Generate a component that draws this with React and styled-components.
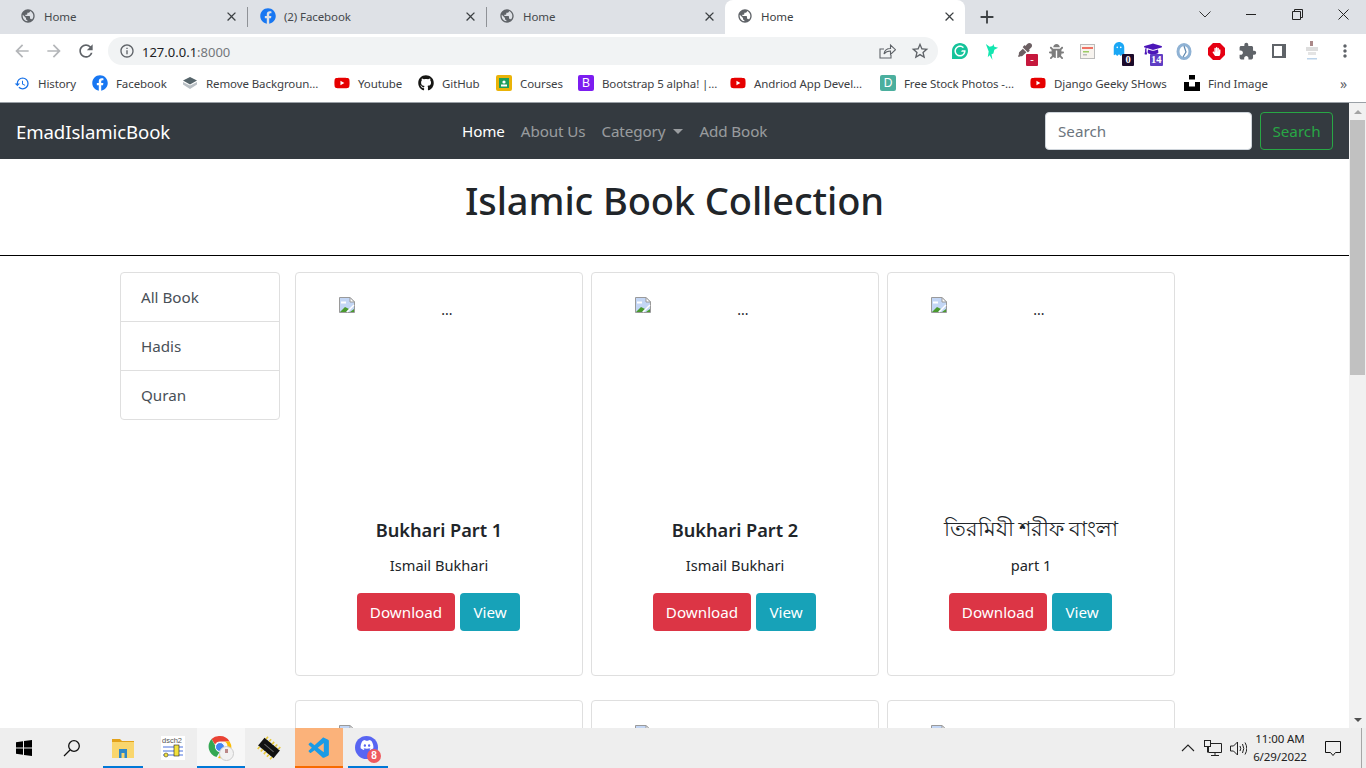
import React from 'react';
import styled, { createGlobalStyle } from 'styled-components';
import { MdPublic, MdClose, MdAdd, MdArrowBack, MdArrowForward, MdRefresh, MdInfoOutline, MdStarBorder, MdMoreVert, MdExtension, MdHistory } from 'react-icons/md';
import { FaFacebook, FaGithub, FaYoutube, FaGhost, FaEyeDropper, FaBug, FaGraduationCap, FaHandPaper, FaDiscord } from 'react-icons/fa';
import { SiGrammarly, SiUnsplash } from 'react-icons/si';
import { VscVscode } from 'react-icons/vsc';

const UI = '"Noto Sans", "Open Sans", "Noto Sans CJK SC", sans-serif';

const Global = createGlobalStyle`
  html, body { margin: 0; padding: 0; height: 100%; overflow: hidden; background: #fff; }
  body { font-family: ${UI}; color: #212529; }
  * { box-sizing: border-box; }
`;

const Shell = styled.div`
  width: 1366px; height: 768px; display: flex; flex-direction: column; overflow: hidden;
`;

/* tab strip */
const TabStrip = styled.div`
  height: 34px; background: #dee1e6; display: flex; padding-left: 8px; flex-shrink: 0; align-items: stretch;
`;
const Tab = styled.div`
  width: ${p => p.$w}px; display: flex; align-items: center; padding: 0 8px 2px 12px;
  font-size: 11.5px; color: ${p => p.$active ? '#3c4043' : '#45484c'}; letter-spacing: -.1px;
  background: ${p => p.$active ? '#fff' : 'transparent'};
  border-radius: ${p => p.$active ? '8px 8px 0 0' : '0'};
`;
const TabSep = styled.span`
  width: 1px; height: 20px; background: #8f9297; align-self: center;
`;
const TabLabel = styled.span`flex: 1; margin-left: 8px; white-space: nowrap;`;
const TabClose = styled(MdClose)`font-size: 15px; color: #3c4043;`;
const NewTab = styled(MdAdd)`font-size: 22px; color: #3c4043; margin: 6px 0 0 11px;`;
const WinControls = styled.div`
  margin-left: auto; display: flex; color: #3c4043; height: 28px; align-items: center;
`;
const WinBtn = styled.div`
  width: 46px; height: 28px; display: flex; align-items: center; justify-content: center;
`;

/* toolbar */
const Toolbar = styled.div`
  height: 34px; background: #fff; display: flex; align-items: center; padding-left: 12px; flex-shrink: 0;
`;
const NavIcon = styled.div`
  width: 32px; height: 28px; display: flex; align-items: center; justify-content: center;
  margin-left: ${p => p.$first ? '-6px' : '0'};
  color: ${p => p.$off ? '#b4b6b9' : '#5f6368'}; font-size: 20px;
`;
const Omnibox = styled.div`
  width: 830px; height: 28px; margin-left: 6px; border-radius: 14px; background: #f1f3f4;
  display: flex; align-items: center; padding: 0 8px 0 11px; font-size: 13px; color: #202124;
`;
const OmniInfo = styled(MdInfoOutline)`font-size: 16px; color: #5f6368; margin-right: 7px;`;
const OmniText = styled.span`padding-top: 2px;`;
const OmniPort = styled.span`color: #74777b;`;
const OmniRight = styled.div`margin-left: auto; display: flex; gap: 14px; align-items: center; color: #5f6368;`;
const Exts = styled.div`display: flex; align-items: center; margin-left: 6px;`;
const Ext = styled.div`
  width: ${p => p.$w || 32}px; height: 28px; position: relative; display: flex; align-items: center; justify-content: center;
  font-size: 16px; color: ${p => p.$c || '#5f6368'}; padding: 0 ${p => p.$pr || 0}px ${p => p.$pb || 0}px 0;
`;
const ExtBadge = styled.span`
  position: absolute; left: ${p => p.$l}px; bottom: -1px; min-width: 12px; height: 12px; padding: 0 1px;
  background: ${p => p.$bg}; color: #fff; font: 700 10.5px/12px "Liberation Serif", serif; text-align: center; border-radius: 1px;
`;

/* bookmarks */
const BookmarkBar = styled.div`
  height: 35px; background: #fff; border-bottom: 1px solid #9aa0a6; display: flex; align-items: center;
  padding-left: 14px; flex-shrink: 0; font-size: 11.5px; color: #3c4043; letter-spacing: -.1px; padding-bottom: 4px;
`;
const Bookmark = styled.div`
  width: ${p => p.$w}px; display: flex; align-items: center; gap: 8px; white-space: nowrap; flex-shrink: 0;
`;
const BmIcon = styled.span`
  width: 16px; height: 16px; display: flex; align-items: center; justify-content: center;
  color: ${p => p.$c}; font-size: 16px; flex-shrink: 0;
`;
const BmSquare = styled.span`
  width: 16px; height: 16px; border-radius: 2px; background: ${p => p.$bg}; color: #fff;
  font: 400 12px/16px "Liberation Sans", sans-serif; text-align: center; flex-shrink: 0;
`;
const BmMore = styled.span`margin-left: auto; margin-right: 19px; font-size: 14px; color: #5f6368;`;

/* page */
const Viewport = styled.div`flex: 1; display: flex; overflow: hidden; min-height: 0;`;
const Page = styled.div`width: 1349px; overflow: hidden; background: #fff;`;
const Navbar = styled.nav`
  height: 56px; background: #343a40; display: flex; align-items: center; padding: 0 16px;
`;
const Brand = styled.div`font-size: 18.6px; color: #fff; letter-spacing: -.1px; width: 446px; white-space: nowrap;`;
const NavList = styled.div`display: flex; gap: 16px; font-size: 15.2px; letter-spacing: -.1px;`;
const NavLink = styled.div`
  color: ${p => p.$active ? '#fff' : 'rgba(255,255,255,.5)'}; white-space: nowrap; display: flex; align-items: center;
`;
const Caret = styled.span`
  display: inline-block; margin-left: 8px; border-top: 5px solid currentColor;
  border-left: 5px solid transparent; border-right: 5px solid transparent;
`;
const SearchForm = styled.div`margin-left: auto; display: flex; gap: 8px;`;
const SearchInput = styled.input`
  width: 207px; height: 38px; border: 1px solid #ced4da; border-radius: 4px; padding: 0 12px;
  font: 15.2px ${UI}; background: #fff; &::placeholder { color: #6c757d; opacity: 1; }
`;
const SearchBtn = styled.button`
  width: 73px; height: 38px; border: 1px solid #28a745; border-radius: 4px; color: #28a745;
  background: transparent; font: 15.2px ${UI}; padding: 0;
`;
const Hero = styled.header`
  height: 97px; border-bottom: 1px solid #000; display: flex; align-items: center; justify-content: center;
`;
const Title = styled.h1`margin: 0 0 14px; font-size: 38px; font-weight: 500; line-height: 48px; color: #212529; letter-spacing: -.1px;`;
const Content = styled.div`display: flex; gap: 15px; padding: 16px 0 0 120px; align-items: flex-start;`;
const Side = styled.ul`
  width: 160px; margin: 0; padding: 0; list-style: none; border: 1px solid #dfdfdf; border-radius: 4px; flex-shrink: 0;
`;
const SideItem = styled.li`
  height: 49px; display: flex; align-items: center; padding-left: 20px; font-size: 15.2px; color: #495057;
  & + & { border-top: 1px solid #dfdfdf; }
  &:first-child { height: 48px; }
`;
const Grid = styled.div`display: grid; grid-template-columns: repeat(3, 288px); column-gap: 8px; row-gap: 24px;`;
const Card = styled.article`
  height: 404px; border: 1px solid #dfdfdf; border-radius: 4px; padding-top: 24px;
  display: flex; flex-direction: column; align-items: center;
`;
const Thumb = styled.div`
  width: 200px; height: 200px; flex-shrink: 0; display: flex; position: relative; justify-content: center;
  padding-left: 16px; font-size: 14px; line-height: 25px; color: #212529;
`;
const BrokenIcon = styled.svg`position: absolute; left: 0; top: 0;`;
const CardTitle = styled.h5`
  margin: 21px 0 11px; font-size: ${p => p.$bn ? '21px' : '18.2px'}; font-weight: ${p => p.$bn ? 400 : 600};
  line-height: 24px; color: #212529; white-space: nowrap; transform: translateY(${p => p.$bn ? '-2px' : '0'});
`;
const CardText = styled.p`margin: 0 0 16px; font-size: 14.6px; line-height: 24px; color: #212529;`;
const Actions = styled.div`display: flex; gap: 5px; margin-right: 1px;`;
const Btn = styled.button`
  width: ${p => p.$w}px; height: 38px; border: 0; border-radius: 4px; background: ${p => p.$bg}; color: #fff;
  font: 15.2px ${UI}; padding: 0;
`;
const Scrollbar = styled.div`
  width: 17px; background: #f1f1f1; display: flex; flex-direction: column; align-items: center;
`;
const ScrollArrow = styled.div`
  height: 17px; width: 17px; display: flex; align-items: center; justify-content: center;
  &::before { content: ''; border-left: 4px solid transparent; border-right: 4px solid transparent;
    ${p => p.$up ? 'border-bottom: 4px solid #a3a3a3;' : 'border-top: 4px solid #505050;'} }
`;
const ScrollThumb = styled.div`width: 15px; height: 255px; background: #c1c1c1; margin-bottom: auto;`;

/* taskbar */
const Taskbar = styled.footer`
  height: 40px; background: #eeeeee; display: flex; align-items: stretch; flex-shrink: 0; color: #111;
`;
const TaskSlot = styled.div`
  width: ${p => p.$w || 48}px; margin-left: ${p => p.$ml || 0}px; display: flex; align-items: center; justify-content: center; position: relative;
  background: ${p => p.$bg || 'transparent'};
  box-shadow: ${p => p.$line ? `inset 0 -2px 0 ${p.$line}` : 'none'};
`;
const DiscordGlyph = styled(FaDiscord)`position: absolute; left: 12px; top: 10px;`;
const TaskBadge = styled.span`
  position: absolute; left: 19px; top: 21px; width: 14px; height: 14px; border-radius: 50%; background: #ef5a5f;
  color: #fff; font: 700 10px/14px "Liberation Sans", sans-serif; text-align: center;
`;
const Tray = styled.div`margin-left: auto; display: flex; align-items: center; color: #222; padding-right: 4px;`;
const TraySvg = styled.svg`margin-left: ${p => p.$ml}px;`;
const Clock = styled.div`
  font-size: 11.5px; line-height: 18px; text-align: center; width: 66px; color: #222; letter-spacing: -.1px;
`;
const Notify = styled.div`width: 40px; height: 40px; display: flex; align-items: center; justify-content: center;`;
const ShowDesktop = styled.div`width: 1px; height: 40px; margin-left: 8px; background: #a6a6a6;`;

const Adblock = styled(FaHandPaper)`position: absolute;`;

const tabs = [
  { id: 1, w: 239, label: 'Home' },
  { id: 2, w: 238, label: '(2) Facebook', fb: true },
  { id: 3, w: 238, label: 'Home', last: true },
];

const RemoveBgIcon = () => (
  <svg width="16" height="12" viewBox="0 0 16 12">
    <path d="M8 6.500l7-3.500v2.500L8 10 1 5.500V3z" fill="#b9bfc4" transform="translate(0 2)" />
    <path d="M8 0l7 3.500L8 7.500 1 3.500z" fill="#56656b" />
  </svg>
);

const bookmarks = [
  { w: 78, t: 'History', i: <BmIcon $c="#1a73e8"><MdHistory size={17} /></BmIcon> },
  { w: 90, t: 'Facebook', i: <BmIcon $c="#1877f2"><FaFacebook size={16} /></BmIcon> },
  { w: 152, t: 'Remove Backgroun...', i: <BmIcon><RemoveBgIcon /></BmIcon> },
  { w: 84, t: 'Youtube', i: <BmIcon $c="#e60000"><FaYoutube size={18} /></BmIcon> },
  { w: 78, t: 'GitHub', i: <BmIcon $c="#161614"><FaGithub size={16} /></BmIcon> },
  { w: 82, t: 'Courses', i: <BmSquare $bg="#eab308"><svg width="16" height="16" viewBox="0 0 16 16"><rect x="3" y="3" width="10" height="10" fill="#1e9e5a" /><circle cx="8" cy="7" r="1.6" fill="#fff" /><rect x="5" y="9.5" width="6" height="2" fill="#fff" /></svg></BmSquare> },
  { w: 152, t: 'Bootstrap 5 alpha! |...', i: <BmSquare $bg="#7c1df0">B</BmSquare> },
  { w: 150, t: 'Andriod App Devel...', i: <BmIcon $c="#e60000"><FaYoutube size={18} /></BmIcon> },
  { w: 150, t: 'Free Stock Photos -...', i: <BmSquare $bg="#4baf9e">D</BmSquare> },
  { w: 154, t: 'Django Geeky SHows', i: <BmIcon $c="#e60000"><FaYoutube size={18} /></BmIcon> },
  { w: 120, t: 'Find Image', i: <BmIcon $c="#000"><SiUnsplash size={16} /></BmIcon> },
];

const books = [
  { id: 1, title: 'Bukhari Part 1', text: 'Ismail Bukhari' },
  { id: 2, title: 'Bukhari Part 2', text: 'Ismail Bukhari' },
  { id: 3, title: 'তিরমিযী শরীফ বাংলা', text: 'part 1', bn: true },
];

const Broken = () => (
  <BrokenIcon width="16" height="16" viewBox="0 0 16 16">
    <path d="M.5.5H11L15.500 5v10.500H.5z" fill="#c3d6f5" stroke="#9a9a9a" />
    <path d="M11 .5V5h4.500z" fill="#fff" stroke="#9a9a9a" />
    <path d="M2 4.500h5v2H2z" fill="#fff" />
    <path d="M1 15l5-5 4 2-3 3z" fill="#4a9a2e" />
    <path d="M11 15l4-3v3z" fill="#4a9a2e" />
    <path d="M8 15l7-7" stroke="#fff" strokeWidth="1.500" />
  </BrokenIcon>
);

const Globe = () => <MdPublic size={16} color="#5f6368" />;

export default function App() {
  return (
    <>
      <Global />
      <Shell>
        <TabStrip>
          {tabs.map(t => (
            <React.Fragment key={t.id}>
              <Tab $w={t.w}>
                {t.fb ? <FaFacebook size={16} color="#1877f2" /> : <Globe />}
                <TabLabel>{t.label}</TabLabel>
                <TabClose />
              </Tab>
              {!t.last && <TabSep />}
            </React.Fragment>
          ))}
          <Tab $w={240} $active>
            <Globe />
            <TabLabel>Home</TabLabel>
            <TabClose />
          </Tab>
          <NewTab />
          <WinControls>
            <WinBtn><svg width="12" height="7" fill="none" stroke="#333"><path d="M.5.5l5.500 5.500 5.500-5.500" /></svg></WinBtn>
            <WinBtn><svg width="10" height="10"><path d="M0 5.500h10" stroke="#222" /></svg></WinBtn>
            <WinBtn><svg width="11" height="11" fill="none" stroke="#222"><path d="M.5 2.500h8v8h-8zM2.500 2.500v-2h8v8h-2" /></svg></WinBtn>
            <WinBtn><svg width="11" height="11" stroke="#222"><path d="M.5.5l10 10M10.500.5l-10 10" /></svg></WinBtn>
          </WinControls>
        </TabStrip>

        <Toolbar>
          <NavIcon $first $off><MdArrowBack /></NavIcon>
          <NavIcon $off><MdArrowForward /></NavIcon>
          <NavIcon><MdRefresh /></NavIcon>
          <Omnibox>
            <OmniInfo />
            <OmniText>127.0.0.1<OmniPort>:8000</OmniPort></OmniText>
            <OmniRight>
              <svg width="17" height="16" viewBox="0 0 17 16" fill="none" stroke="#5f6368" strokeWidth="1.100">
                <path d="M5 6H1v9h11v-3" />
                <path d="M5 11c.5-3.500 3-5.500 6.500-5.500V2l5 4.700-5 4.700V8c-3 0-5 1-6.500 3z" />
              </svg>
              <MdStarBorder size={20} />
            </OmniRight>
          </Omnibox>
          <Exts>
            <Ext $c="#15c39a"><SiGrammarly size={16} /></Ext>
            <Ext $w={31} $c="#12e6b0"><svg width="15" height="17" viewBox="0 0 16 18" fill="currentColor"><path d="M2 1l4 3 3-1 1-2 1 3 4 1-4 2-1 4-2 1 1 6-3-5-2 2 1-6z" /></svg></Ext>
            <Ext $w={36} $c="#6b5f62" $pb={3}><FaEyeDropper size={14} /><ExtBadge $bg="#c6183d" $l={19}>-</ExtBadge></Ext>
            <Ext $w={26} $c="#7d7d7d"><FaBug size={15} /></Ext>
            <Ext $w={36}>
              <svg width="15" height="15" viewBox="0 0 15 15"><rect x=".5" y=".5" width="14" height="14" fill="#f7f3ee" stroke="#bbb" /><rect x="2" y="3" width="11" height="2" fill="#ef7264" /><rect x="3" y="7" width="6" height="1.500" fill="#9ccc65" /><rect x="3" y="10" width="4" height="1.500" fill="#bbb" /></svg>
            </Ext>
            <Ext $w={32} $c="#1aa7f5" $pr={5} $pb={5}><FaGhost size={14} /><ExtBadge $bg="#1b0a2a" $l={17}>0</ExtBadge></Ext>
            <Ext $w={36} $c="#4b16b8" $pr={4} $pb={5}><FaGraduationCap size={18} /><ExtBadge $bg="#5f3dc4" $l={13}>14</ExtBadge></Ext>
            <Ext $w={22}>
              <svg width="16" height="17" viewBox="0 0 16 17" fill="none"><ellipse cx="8" cy="8.500" rx="6" ry="7" stroke="#8fb2d4" strokeWidth="3" /><path d="M8 3l2 6-3 5" stroke="#5d86ad" strokeWidth="1.200" /></svg>
            </Ext>
            <Ext $w={42}>
              <svg width="17" height="17" viewBox="0 0 17 17"><path d="M5 0h7l5 5v7l-5 5H5l-5-5V5z" fill="#e60012" /></svg>
              <Adblock size={9} color="#fff" />
            </Ext>
            <Ext $w={20} $c="#5f6368"><MdExtension size={19} /></Ext>
            <Ext $w={44}>
              <svg width="14" height="14" fill="none"><rect x="1" y="1" width="12" height="12" stroke="#5f6368" strokeWidth="2" /><rect x="10" y="1" width="3" height="12" fill="#5f6368" /></svg>
            </Ext>
            <Ext $w={22}>
              <svg width="16" height="20" viewBox="0 0 16 20"><rect x="6" y="0" width="3" height="5" fill="#a88" /><rect x="2" y="6" width="12" height="4" fill="#ddd" /><rect x="4" y="11" width="8" height="3" fill="#e4e4e4" /><rect x="3" y="17" width="10" height="1.500" fill="#bcd3ea" /></svg>
            </Ext>
            <Ext $w={43}><MdMoreVert size={20} /></Ext>
          </Exts>
        </Toolbar>

        <BookmarkBar>
          {bookmarks.map(b => (
            <Bookmark $w={b.w} key={b.t}>{b.i}<span>{b.t}</span></Bookmark>
          ))}
          <BmMore>»</BmMore>
        </BookmarkBar>

        <Viewport>
          <Page>
            <Navbar>
              <Brand>EmadIslamicBook</Brand>
              <NavList>
                <NavLink $active>Home</NavLink>
                <NavLink>About Us</NavLink>
                <NavLink>Category<Caret /></NavLink>
                <NavLink>Add Book</NavLink>
              </NavList>
              <SearchForm>
                <SearchInput placeholder="Search" />
                <SearchBtn>Search</SearchBtn>
              </SearchForm>
            </Navbar>
            <Hero><Title>Islamic Book Collection</Title></Hero>
            <Content>
              <Side>
                <SideItem>All Book</SideItem>
                <SideItem>Hadis</SideItem>
                <SideItem>Quran</SideItem>
              </Side>
              <Grid>
                {books.map(b => (
                  <Card key={b.id}>
                    <Thumb><Broken />...</Thumb>
                    <CardTitle $bn={b.bn}>{b.title}</CardTitle>
                    <CardText>{b.text}</CardText>
                    <Actions>
                      <Btn $w={98} $bg="#dc3545">Download</Btn>
                      <Btn $w={60} $bg="#17a2b8">View</Btn>
                    </Actions>
                  </Card>
                ))}
                {books.map(b => (
                  <Card key={b.id}>
                    <Thumb><Broken /></Thumb>
                  </Card>
                ))}
              </Grid>
            </Content>
          </Page>
          <Scrollbar>
            <ScrollArrow $up />
            <ScrollThumb />
            <ScrollArrow />
          </Scrollbar>
        </Viewport>

        <Taskbar>
          <TaskSlot>
            <svg width="16" height="16" viewBox="0 0 16 16" fill="#000"><path d="M0 2.200l7-1v6.300H0zM8 1l8-1v7.500H8zM0 8.500h7v6.300l-7-1zM8 8.500h8V16l-8-1z" /></svg>
          </TaskSlot>
          <TaskSlot>
            <svg width="18" height="18" viewBox="0 0 18 18" fill="none" stroke="#111" strokeWidth="1.300"><circle cx="11" cy="7" r="5.300" /><path d="M7 11l-6 6" /></svg>
          </TaskSlot>
          <TaskSlot $ml={7} $w={40} $line="#0078d7">
            <svg width="22" height="19" viewBox="0 0 22 19"><path d="M0 0h8l2 2h12v4H0z" fill="#e3a21a" /><rect y="3" width="22" height="16" fill="#f9d66d" /><rect x="7" y="10" width="8" height="9" fill="#2f88c7" /><rect x="9.500" y="14" width="3" height="5" fill="#f9d66d" /></svg>
          </TaskSlot>
          <TaskSlot $ml={6} $w={48}>
            <svg width="24" height="24" viewBox="0 0 24 24"><rect width="24" height="24" fill="#fff" /><text x="1" y="7" fontSize="7.500" fontFamily="Liberation Sans" fill="#555">dsch2</text><path d="M2 11h20M2 15h20M2 19h20" stroke="#1c4fd6" strokeWidth=".8" /><rect x="13" y="9" width="5" height="11" fill="#f2e13c" stroke="#222" strokeWidth=".6" /><circle cx="5" cy="19" r="2" fill="#f2e13c" stroke="#222" strokeWidth=".5" /></svg>
          </TaskSlot>
          <TaskSlot $w={48} $bg="#f7f7f7" $line="#0078d7">
            <svg width="26" height="26" viewBox="0 0 26 26"><path d="M12 1a11 11 0 0 1 9.600 5.500H12a5.500 5.500 0 0 0-5 3L3.500 4A11 11 0 0 1 12 1z" fill="#ea4335" /><path d="M3.500 4L8 12a5 5 0 0 0 3.500 5.200L8.500 22A11 11 0 0 1 3.500 4z" fill="#34a853" /><path d="M21.600 6.500A11 11 0 0 1 10 23l4-7a5 5 0 0 0 2.500-9.500z" fill="#fbbc04" /><circle cx="12" cy="12" r="4.500" fill="#4285f4" stroke="#fff" /><circle cx="18.500" cy="18.500" r="7" fill="#f2f2f2" stroke="#ccc" /><rect x="17" y="14" width="3" height="4" fill="#b88" /></svg>
          </TaskSlot>
          <TaskSlot $w={48}>
            <svg width="26" height="26" viewBox="0 0 26 26"><g transform="rotate(40 13 13)"><rect x="3" y="8" width="20" height="10" fill="#111" /><path d="M5 8V5M9 8V5M13 8V5M17 8V5M21 8V5M5 18v3M9 18v3M13 18v3M17 18v3M21 18v3" stroke="#e8c93a" strokeWidth="1.600" /><path d="M7 13h12" stroke="#666" /></g></svg>
          </TaskSlot>
          <TaskSlot $ml={2} $w={48} $bg="#fbb27a" $line="#f76a00"><VscVscode size={25} color="#1a9be6" /></TaskSlot>
          <TaskSlot $ml={5} $w={40} $line="#0078d7">
            <svg width="23" height="23" viewBox="0 0 23 23" style={{ marginRight: 3, marginTop: -2 }}><circle cx="11.500" cy="11.500" r="11.500" fill="#5865f2" /></svg>
            <DiscordGlyph size={14} color="#fff" />
            <TaskBadge>8</TaskBadge>
          </TaskSlot>
          <Tray>
            <svg width="14" height="8" fill="none" stroke="#222" strokeWidth="1.100"><path d="M1 7l6-6 6 6" /></svg>
            <TraySvg $ml={9} width="18" height="16" viewBox="0 0 18 16" fill="none" stroke="#222"><path d="M4.500 3.500h13v9h-13zM11 12.500v3M7 15.500h8" /><rect x=".5" y=".5" width="6" height="6" fill="#eee" /><path d="M3.500 6.500v6" /></TraySvg>
            <TraySvg $ml={8} width="17" height="15" viewBox="0 0 17 15" fill="none" stroke="#222"><path d="M.5 5h3l4-4v13l-4-4h-3zM10 5q1.500 2.500 0 5M12.500 3q2.500 4.500 0 9M15 1.500q3.500 6 0 12" /></TraySvg>
            <Clock>11:00 AM<br />6/29/2022</Clock>
            <Notify>
              <svg width="16" height="15" fill="none" stroke="#111"><path d="M.5.5h15v11h-5l-2.500 3-2.500-3h-5z" /></svg>
            </Notify>
            <ShowDesktop />
          </Tray>
        </Taskbar>
      </Shell>
    </>
  );
}
